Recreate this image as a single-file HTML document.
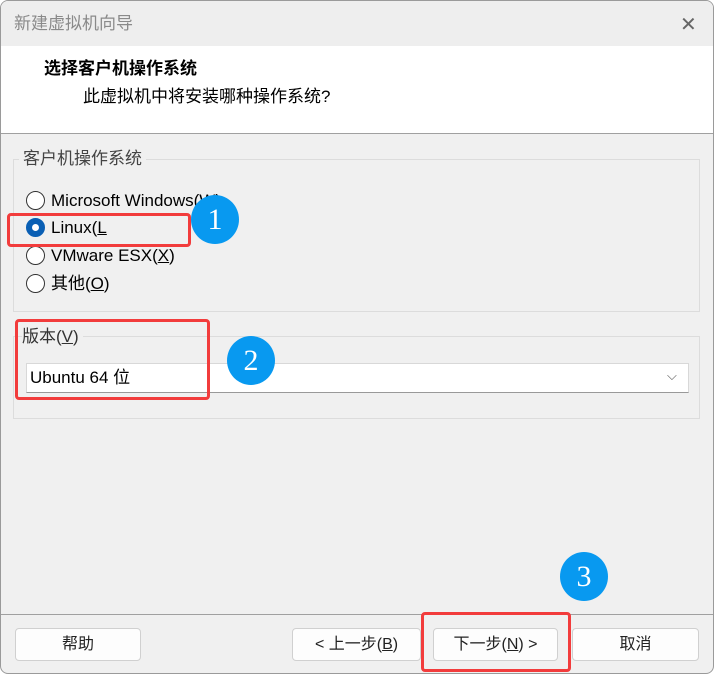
<!DOCTYPE html>
<html><head><meta charset="utf-8"><style>
*{margin:0;padding:0;box-sizing:border-box}
body{width:714px;height:674px;background:#fff;font-family:"Liberation Sans","Noto Sans CJK SC",sans-serif;position:relative;overflow:hidden}
.win{position:absolute;left:0;top:0;width:714px;height:674px;border:1px solid #9a9a9a;border-radius:8px;background:#f0f0f0;overflow:hidden}
.title{position:absolute;left:0;top:0;width:712px;height:45px;background:#eeeeee;}
.title span{position:absolute;left:13px;top:13px;font-size:17px;line-height:20px;color:#8a8a8a}
.close{position:absolute;left:679px;top:11px;font-size:20px;color:#666;font-weight:300}
.hdr{position:absolute;left:0;top:45px;width:712px;height:88px;background:#fff;border-bottom:1px solid #a0a0a0}
.t{position:absolute;font-size:17px;line-height:20px;color:#000;white-space:nowrap}
.grp{position:absolute;border:1px solid #dcdcdc}
.radio{position:absolute;left:25px;width:19px;height:19px;border:1px solid #333;border-radius:50%;background:#fff}
.radio.on{background:#0a5fb4;border-color:#0a5fb4}
.radio.on:after{content:"";position:absolute;left:5px;top:5px;width:7px;height:7px;border-radius:50%;background:#fff}
.red{position:absolute;border:3px solid #f23c3c;border-radius:4px}
.num{position:absolute;width:48px;height:49px;border-radius:50%;background:#0899f0;color:#fff;font-family:"Liberation Serif",serif;font-size:30px;text-align:center;line-height:49px}
.btn{position:absolute;top:627px;height:33px;border:1px solid #d0d0d0;border-radius:4px;background:#fdfdfd;font-size:16px;text-align:center;line-height:31px;color:#222}
u{text-decoration:underline}
</style></head><body>
<div class="win">
<div class="title"><span>新建虚拟机向导</span><div class="close">✕</div></div>
<div class="hdr">
<div class="t" style="left:43px;top:13px;font-weight:bold">选择客户机操作系统</div>
<div class="t" style="left:82px;top:41px">此虚拟机中将安装哪种操作系统?</div>
</div>
<div class="grp" style="left:12px;top:158px;width:687px;height:153px"></div>
<div class="t" style="left:18px;top:148px;background:#f0f0f0;padding:0 4px;color:#444">客户机操作系统</div>
<div class="radio" style="top:190px"></div><div class="t" style="left:50px;top:190px">Microsoft Windows(W)</div>
<div class="radio on" style="top:217px"></div><div class="t" style="left:50px;top:217px">Linux(<u>L</u></div>
<div class="radio" style="top:245px"></div><div class="t" style="left:50px;top:245px">VMware ESX(<u>X</u>)</div>
<div class="radio" style="top:273px"></div><div class="t" style="left:50px;top:273px">其他(<u>O</u>)</div>
<div class="grp" style="left:12px;top:335px;width:687px;height:83px"></div>
<div class="t" style="left:21px;top:326px;background:#f0f0f0;padding-right:4px;color:#333">版本(<u>V</u>)</div>
<div style="position:absolute;left:25px;top:362px;width:663px;height:30px;background:#fff;border:1px solid #d8d8d8;border-bottom-color:#999"></div>
<div class="t" style="left:29px;top:367px">Ubuntu 64 位</div>
<div class="t" style="left:666px;top:365px;font-size:13px;color:#555">⌵</div>
<div style="position:absolute;left:0;top:613px;width:712px;border-top:1px solid #a0a0a0"></div>
<div class="btn" style="left:14px;width:126px">帮助</div>
<div class="btn" style="left:291px;width:129px">&lt; 上一步(<u>B</u>)</div>
<div class="btn" style="left:432px;width:125px">下一步(<u>N</u>) &gt;</div>
<div class="btn" style="left:571px;width:127px">取消</div>
<div class="red" style="left:6px;top:212px;width:184px;height:34px"></div>
<div class="red" style="left:14px;top:318px;width:195px;height:81px"></div>
<div class="red" style="left:420px;top:611px;width:150px;height:60px"></div>
<div class="num" style="left:190px;top:194px">1</div>
<div class="num" style="left:226px;top:335px">2</div>
<div class="num" style="left:559px;top:551px">3</div>
</div>
</body></html>
